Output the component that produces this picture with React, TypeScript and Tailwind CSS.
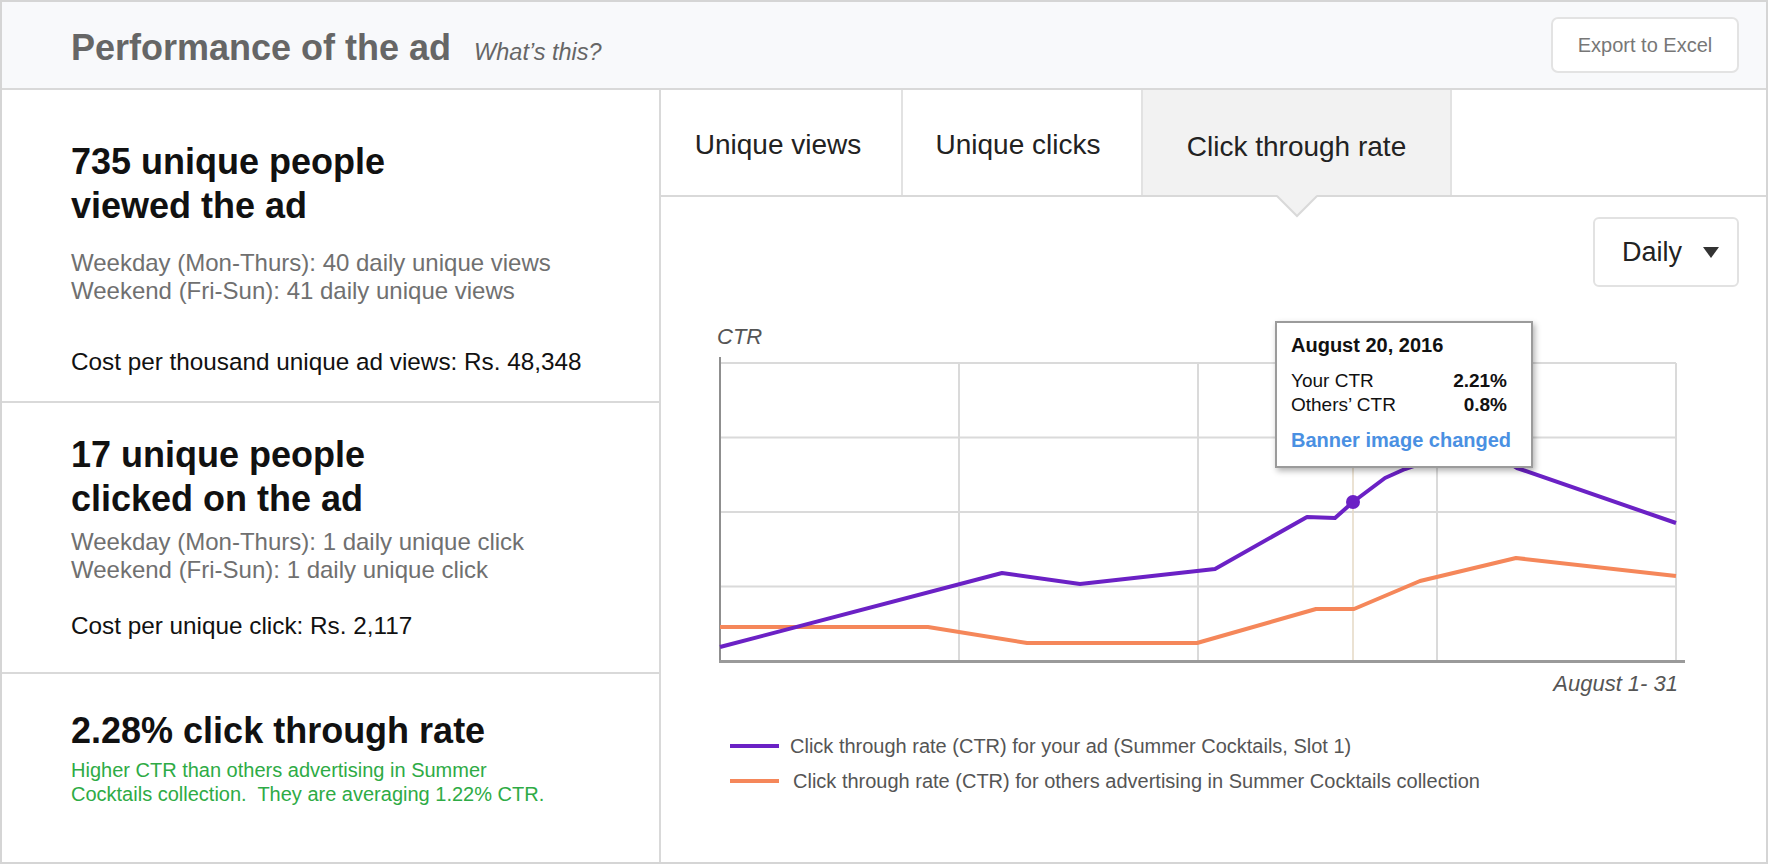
const purplePts = [
  [59, 360], [341, 286], [419, 297], [554, 282], [646, 230], [674, 231], [692, 215],
  [724, 191], [744, 182], [790, 166], [830, 164], [856, 181], [1015, 236],
];
const orangePts = [
  [59, 340], [267, 340], [366, 356], [536, 356], [655, 322], [693, 322], [759, 294],
  [855, 271], [1015, 289],
];
const toPoints = (pts: number[][]) => pts.map((p) => p.join(",")).join(" ");

const hLines = [76, 150.5, 225, 299.5];
const vLines = [298, 537, 776, 1015];

const Chart = () => (
  <div className="relative h-[413px] shrink-0">
    <svg width="1105" height="413" className="block">
      <text x="56" y="57" fontStyle="italic" fontSize="22" fill="#555" fontFamily="Liberation Sans, Arial, sans-serif">
        CTR
      </text>
      {hLines.map((y) => (
        <line key={y} x1="59" x2="1015" y1={y} y2={y} stroke="#dadada" strokeWidth="2" />
      ))}
      {vLines.map((x) => (
        <line key={x} x1={x} x2={x} y1="76" y2="374" stroke="#dadada" strokeWidth="2" />
      ))}
      <line x1="692" x2="692" y1="181" y2="374" stroke="#e4d9c4" strokeWidth="1.5" />
      <line x1="59" x2="59" y1="70" y2="375" stroke="#8f8f8f" strokeWidth="2" />
      <line x1="58" x2="1024" y1="374.5" y2="374.5" stroke="#9a9a9a" strokeWidth="3" />
      <polyline points={toPoints(orangePts)} fill="none" stroke="#f5875a" strokeWidth="4" strokeLinejoin="round" />
      <polyline points={toPoints(purplePts)} fill="none" stroke="#6b21c5" strokeWidth="4" strokeLinejoin="round" />
      <circle cx="692" cy="215" r="7" fill="#6b21c5" />
      <text x="1017" y="404" textAnchor="end" fontStyle="italic" fontSize="22" fill="#555" fontFamily="Liberation Sans, Arial, sans-serif">
        August 1- 31
      </text>
    </svg>

    {/* hover tooltip */}
    <div className="absolute left-[614px] top-[34px] w-[258px] h-[147px] bg-white border-2 border-[#9b9b9b] shadow-[2px_3px_6px_rgba(0,0,0,0.3)] pl-[14px] pt-[10px]">
      <div className="text-[20px] leading-[24px] font-bold text-[#111]">August 20, 2016</div>
      <div className="w-[216px] mt-[12px] text-[19px] leading-[24px] text-[#111]">
        <div className="flex justify-between">
          <span>Your CTR</span>
          <span className="font-bold">2.21%</span>
        </div>
        <div className="flex justify-between">
          <span>Others’ CTR</span>
          <span className="font-bold">0.8%</span>
        </div>
      </div>
      <div className="mt-[11px] text-[20px] leading-[24px] font-bold text-[#4a90e2]">Banner image changed</div>
    </div>
  </div>
);

const Stat = ({ title, lines, cost }: { title: string[]; lines: string[]; cost: string }) => (
  <>
    <h2 className="text-[36px] leading-[44px] font-bold text-[#111]">
      {title[0]}
      <br />
      {title[1]}
    </h2>
    <div className="text-[24px] leading-[28px] text-[#707070]">
      {lines.map((l) => (
        <div key={l}>{l}</div>
      ))}
    </div>
    <div className="text-[24.3px] leading-[28px] text-[#111]">{cost}</div>
  </>
);

export default function App() {
  return (
    <div className="w-[1768px] h-[864px] border-2 border-[#d5d5d5] bg-white flex flex-col overflow-hidden font-['Liberation_Sans',Arial,sans-serif]">
      <header className="h-[88px] shrink-0 bg-[#f8f9fb] border-b-2 border-[#d9d9d9] flex items-center justify-between pl-[69px] pr-[27px]">
        <div className="flex items-baseline mt-[6px]">
          <h1 className="text-[36px] leading-[44px] font-bold text-[#666]">Performance of the ad</h1>
          <span className="ml-[23px] text-[23.5px] italic text-[#666]">What’s this?</span>
        </div>
        <button className="w-[188px] h-[56px] rounded-[7px] border-2 border-[#e3e3e3] bg-white text-[20px] text-[#777]">
          Export to Excel
        </button>
      </header>

      <div className="flex flex-1 min-h-0">
        <aside className="w-[659px] shrink-0 border-r-2 border-[#d9d9d9] flex flex-col">
          <section className="h-[313px] shrink-0 border-b-2 border-[#d9d9d9] pt-[50px] pl-[69px] [&>div:nth-of-type(1)]:mt-[21px] [&>div:nth-of-type(2)]:mt-[43px]">
            <Stat
              title={["735 unique people", "viewed the ad"]}
              lines={["Weekday (Mon-Thurs): 40 daily unique views", "Weekend (Fri-Sun): 41 daily unique views"]}
              cost="Cost per thousand unique ad views: Rs. 48,348"
            />
          </section>
          <section className="h-[271px] shrink-0 border-b-2 border-[#d9d9d9] pt-[30px] pl-[69px] [&>div:nth-of-type(1)]:mt-[7px] [&>div:nth-of-type(2)]:mt-[28px]">
            <Stat
              title={["17 unique people", "clicked on the ad"]}
              lines={["Weekday (Mon-Thurs): 1 daily unique click", "Weekend (Fri-Sun): 1 daily unique click"]}
              cost="Cost per unique click: Rs. 2,117"
            />
          </section>
          <section className="flex-1 pt-[35px] pl-[69px]">
            <h2 className="text-[36px] leading-[44px] font-bold text-[#111]">2.28% click through rate</h2>
            <p className="mt-[5px] text-[20px] leading-[24px] text-[#2eab45]">
              Higher CTR than others advertising in Summer
              <br />
              Cocktails collection.&nbsp; They are averaging 1.22% CTR.
            </p>
          </section>
        </aside>

        <main className="flex-1 flex flex-col min-w-0">
          <nav className="h-[107px] shrink-0 border-b-2 border-[#d9d9d9] flex text-[28px] text-[#222]">
            <div className="w-[242px] border-r-2 border-[#e2e2e2] flex items-center justify-center pt-[4px] pr-[6px]">Unique views</div>
            <div className="w-[240px] border-r-2 border-[#e2e2e2] flex items-center justify-center pt-[4px] pr-[8px]">Unique clicks</div>
            <div className="relative w-[309px] border-r-2 border-[#e2e2e2] bg-[#f2f2f2] flex items-center justify-center pt-[8px]">
              Click through rate
              <svg width="44" height="24" className="absolute left-1/2 -translate-x-1/2 top-[105px] z-10">
                <polygon points="2,0 42,0 22,21" fill="#f2f2f2" />
                <polyline points="2,1 22,21 42,1" fill="none" stroke="#d9d9d9" strokeWidth="2" />
              </svg>
            </div>
          </nav>

          <div className="flex justify-end pt-[20px] pr-[27px]">
            <div className="h-[70px] w-[146px] border-2 border-[#e2e2e2] rounded-[6px] flex items-center pl-[27px] text-[27px] text-[#222]">
              Daily
              <svg width="16" height="11" viewBox="0 0 16 11" className="ml-[21px]">
                <polygon points="0,0 16,0 8,11" fill="#333" />
              </svg>
            </div>
          </div>

          <Chart />

          <div className="mt-[34px] pl-[69px] flex flex-col gap-[11px] text-[20px] leading-[24px] text-[#555]">
            <div className="flex items-center gap-[11px]">
              <span className="w-[49px] h-[4px] bg-[#6b21c5]" />
              Click through rate (CTR) for your ad (Summer Cocktails, Slot 1)
            </div>
            <div className="flex items-center gap-[14px]">
              <span className="w-[49px] h-[4px] bg-[#f5875a]" />
              Click through rate (CTR) for others advertising in Summer Cocktails collection
            </div>
          </div>
        </main>
      </div>
    </div>
  );
}
